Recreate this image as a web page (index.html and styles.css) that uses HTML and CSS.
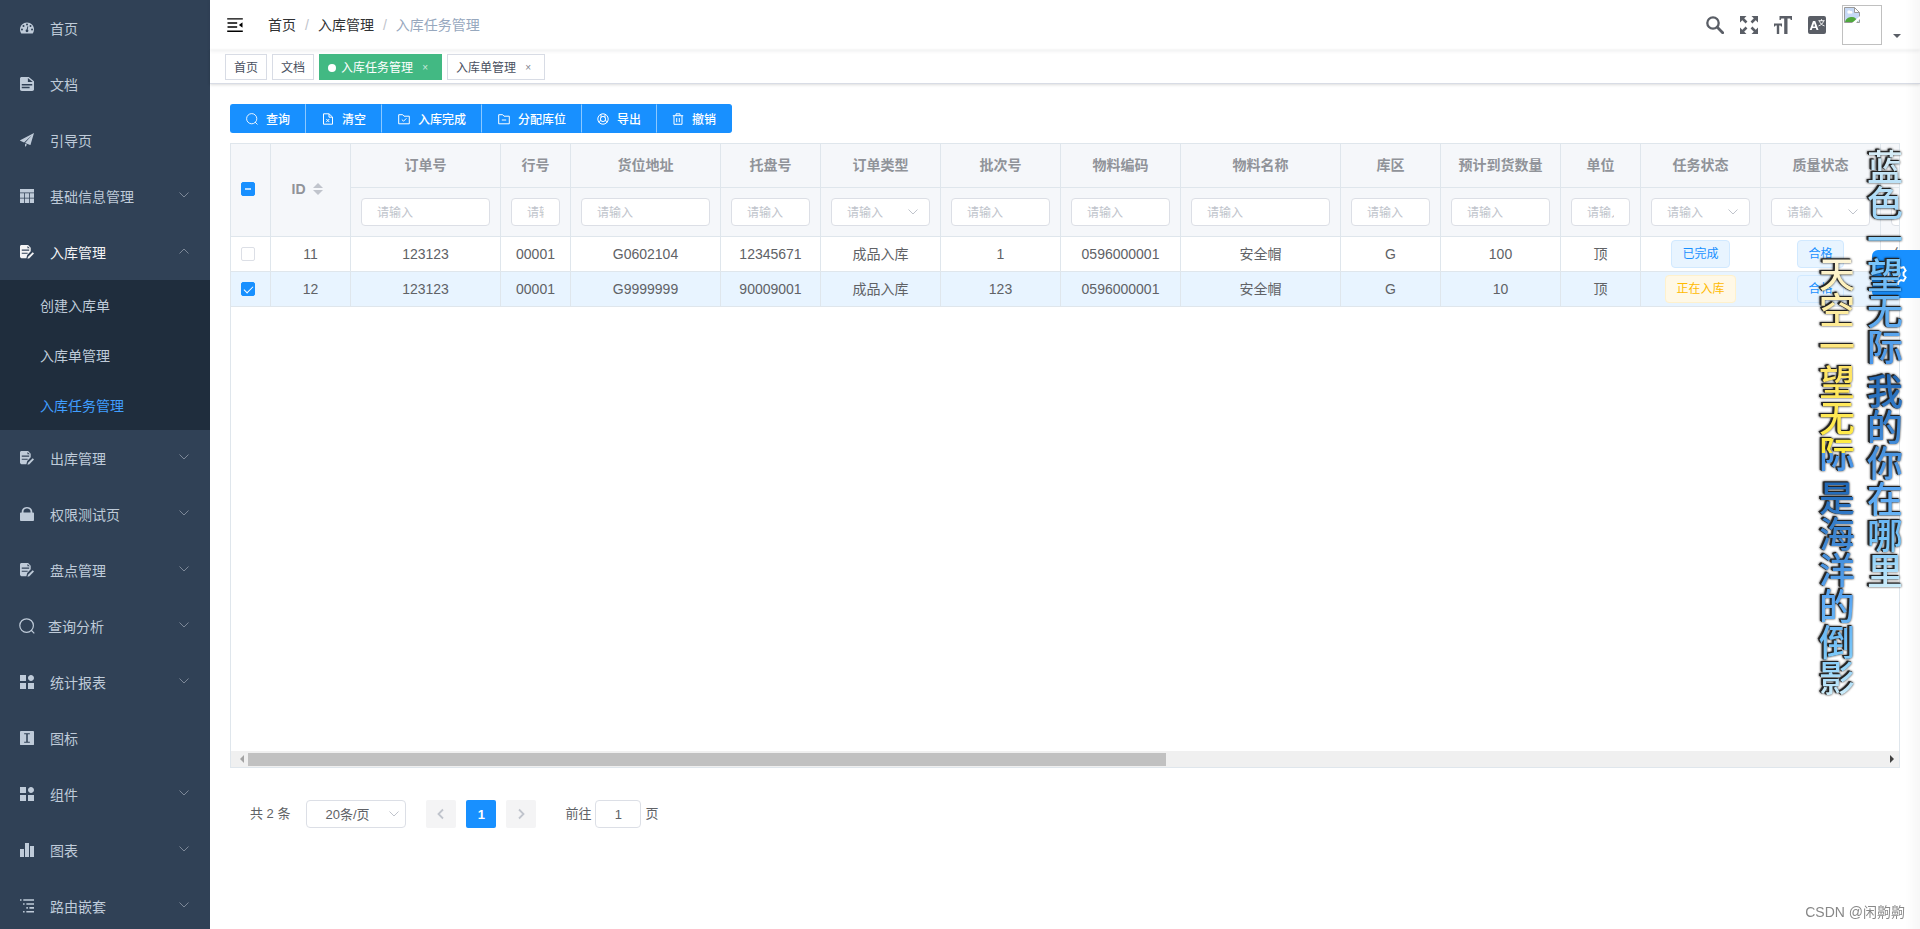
FILE: index.html
```html
<!DOCTYPE html>
<html lang="zh-CN">
<head>
<meta charset="utf-8">
<title>入库任务管理</title>
<link rel="stylesheet" href="styles.css">
</head>
<body>
<svg class="sprite" aria-hidden="true">
  <symbol id="i-dashboard" viewBox="0 0 128 100"><path fill="currentColor" d="M64 0C28.600 0 0 28.500 0 63.600c0 12.500 3.500 24 10.100 34.500.9 1.300 2.200 1.900 3.900 1.900h100c1.700 0 3-.6 3.900-1.900C124.500 87.700 128 76.200 128 63.600 128 28.500 99.300 0 64 0z"/><g class="hole"><circle cx="18" cy="64" r="9"/><circle cx="32" cy="32" r="9"/><circle cx="64" cy="18" r="9"/><circle cx="96" cy="32" r="9"/><circle cx="110" cy="64" r="9"/><circle cx="64" cy="76" r="13"/><path d="M58 72l10-38 8 2-8 40z"/></g></symbol>
  <symbol id="i-doc" viewBox="0 0 128 128"><path fill="currentColor" d="M71.984 44.815H115.9L71.984 9.642v35.173zM16.094.05h63.875l47.906 38.37v76.74c0 3.392-1.682 6.645-4.677 9.044-2.995 2.399-7.057 3.746-11.292 3.746H16.094c-4.236 0-8.297-1.347-11.292-3.746-2.995-2.399-4.677-5.652-4.677-9.044V12.84C.125 5.742 7.23.05 16.094.05zm71.86 102.32V89.58h-71.86v12.79h71.86zm23.952-25.58V64H16.094v12.79h95.812z"/></symbol>
  <symbol id="i-guide" viewBox="0 0 128 128"><path fill="currentColor" d="M1.482 70.131l36.204 16.18 69.932-65.485-61.38 70.594 46.435 18.735c1.119.425 2.397-.17 2.797-1.363v-.085L127.998.047 1.322 65.874c-1.12.597-1.519 1.959-1.04 3.151.32.511.72.937 1.2 1.107zm44.676 57.821L64.22 107.26l-18.062-7.834v28.527z"/></symbol>
  <symbol id="i-table" viewBox="0 0 128 128"><path fill="currentColor" d="M0 0h128v31H0zM0 38h38v42H0zM0 86h38v42H0zM45 38h38v42H45zM45 86h38v42H45zM90 38h38v42H90zM90 86h38v42H90z"/></symbol>
  <symbol id="i-edit" viewBox="0 0 128 128"><path fill="currentColor" fill-rule="evenodd" d="M14 0h60l24 24v34L66 92l-8 28H14c-8 0-14-6-14-14V14C0 6 6 0 14 0zM16 42v11h68V42zM16 70v11h54V70zM68 8v22h22z"/><path fill="currentColor" d="M116 66l12 12-42 42-18 6 6-18z"/></symbol>
  <symbol id="i-lock" viewBox="0 0 128 128"><path fill="currentColor" d="M119.88 49.674h-7.987V39.52C111.893 17.738 90.45.08 63.996.08 37.543.08 16.1 17.738 16.1 39.52v10.154H8.113c-4.408 0-7.987 2.94-7.987 6.577v65.13c0 3.637 3.57 6.577 7.987 6.577H119.88c4.407 0 7.987-2.94 7.987-6.577v-65.13c-.008-3.636-3.58-6.577-7.987-6.577zm-23.953 0H32.065V39.52c0-14.524 14.301-26.295 31.931-26.295 17.63 0 31.932 11.777 31.932 26.295v10.153z"/></symbol>
  <symbol id="i-search" viewBox="0 0 16 16"><circle cx="7.600" cy="7.600" r="6.800" fill="none" stroke="currentColor" stroke-width="1.200"/><path d="M12 12l3.300 3.300" stroke="currentColor" stroke-width="1.200"/></symbol>
  <symbol id="i-component" viewBox="0 0 128 128"><path fill="currentColor" d="M0 0h54.857v54.857H0V0zm0 73.143h54.857V128H0V73.143zm73.143 0H128V128H73.143V73.143zm27.428-18.286C115.72 54.857 128 42.577 128 27.43 128 12.28 115.72 0 100.571 0 85.423 0 73.143 12.28 73.143 27.429c0 15.148 12.28 27.428 27.428 27.428z"/></symbol>
  <symbol id="i-icon" viewBox="0 0 128 128"><path fill="currentColor" fill-rule="evenodd" d="M8 0h112a8 8 0 0 1 8 8v112a8 8 0 0 1-8 8H8a8 8 0 0 1-8-8V8a8 8 0 0 1 8-8zM38 20v10h19v68H38v10h52V98H71V30h19V20z"/></symbol>
  <symbol id="i-chart" viewBox="0 0 128 128"><path fill="currentColor" d="M0 54.857h36.571V128H0V54.857zM91.429 27.43H128V128H91.429V27.429zM45.714 0h36.572v128H45.714V0z"/></symbol>
  <symbol id="i-nested" viewBox="0 0 128 128"><path fill="currentColor" d="M0 2h14v14H0zM30 2h98v14H30zM28 38h14v14H28zM58 38h70v14H58zM58 74h14v14H58zM86 74h42v14H86zM28 110h14v14H28zM58 110h70v14H58z"/></symbol>
  <symbol id="i-down" viewBox="0 0 12 12"><path d="M1.500 3.500L6 8l4.500-4.500" fill="none" stroke="currentColor"/></symbol>
  <symbol id="i-menu" viewBox="0 0 1024 1024"><path transform="rotate(180 512 512)" fill="currentColor" d="M408 442h480c4.400 0 8-3.600 8-8v-56c0-4.400-3.600-8-8-8H408c-4.400 0-8 3.600-8 8v56c0 4.400 3.600 8 8 8zm-8 204c0 4.400 3.600 8 8 8h480c4.400 0 8-3.600 8-8v-56c0-4.400-3.600-8-8-8H408c-4.400 0-8 3.600-8 8v56zm504-486H120c-4.400 0-8 3.600-8 8v56c0 4.400 3.600 8 8 8h784c4.400 0 8-3.600 8-8v-56c0-4.400-3.600-8-8-8zm0 632H120c-4.400 0-8 3.600-8 8v56c0 4.400 3.600 8 8 8h784c4.400 0 8-3.600 8-8v-56c0-4.400-3.600-8-8-8zM142.400 642.100L298.700 519a8.840 8.840 0 0 0 0-13.900L142.400 381.900c-5.800-4.600-14.400-.5-14.400 6.900v246.300a8.900 8.900 0 0 0 14.400 7z"/></symbol>
  <symbol id="i-find" viewBox="0 0 18 18"><circle cx="7" cy="7" r="5.700" fill="none" stroke="currentColor" stroke-width="2.300"/><path d="M11.300 11.300l5.400 5.400" stroke="currentColor" stroke-width="2.800" stroke-linecap="round"/></symbol>
  <symbol id="i-full" viewBox="0 0 18 18"><g fill="currentColor" stroke="currentColor"><path stroke="none" d="M0 0h6.500L0 6.500zM18 0v6.500L11.500 0zM0 18v-6.500L6.500 18zM18 18h-6.500l6.500-6.500z"/><path stroke-width="2.600" d="M2 2l4.500 4.500M16 2l-4.500 4.500M2 16l4.500-4.500M16 16l-4.500-4.500"/></g></symbol>
  <symbol id="i-size" viewBox="0 0 18 18"><path fill="currentColor" d="M5.500 0H18v4h-1.200l-.6-1.500h-2.700V18h-3.300V2.500H7.300L6.700 4H5.500zM0 7.500h8v3H7l-.4-1H5.200V18H2.800V9.500H1.400l-.4 1H0z"/></symbol>
  <symbol id="i-lang" viewBox="0 0 18 18"><path fill="currentColor" fill-rule="evenodd" d="M2 0h14a2 2 0 0 1 2 2v14a2 2 0 0 1-2 2H2a2 2 0 0 1-2-2V2a2 2 0 0 1 2-2zM5 5L1.700 14h2l.7-2h3.400l.7 2h2L7.200 5zM6.100 7.200l1.100 3.200H5z"/><path fill="none" stroke="#fff" stroke-width=".9" d="M10.400 4.700h6.200M13.500 3.200v1.500M11.500 4.900c.6 2.600 2.300 4.100 5 5M15.500 4.900c-.6 2.600-2.300 4.100-5 5"/></symbol>
  <symbol id="i-del" viewBox="0 0 12 12"><g fill="none" stroke="currentColor"><path d="M1.500.8h5.500L10.500 4v7.200h-9zM7 1v3.200h3.300M4.300 6l3 3M7.300 6l-3 3"/></g></symbol>
  <symbol id="i-fchk" viewBox="0 0 12 12"><g fill="none" stroke="currentColor"><path d="M.7 1.700h4l1.300 1.500h5.300v7.600H.7zM3.800 6.500l1.700 1.700 2.900-2.900"/></g></symbol>
  <symbol id="i-frem" viewBox="0 0 12 12"><g fill="none" stroke="currentColor"><path d="M.7 1.700h4l1.300 1.500h5.300v7.600H.7zM3.800 7h4.400"/></g></symbol>
  <symbol id="i-export" viewBox="0 0 12 12"><g fill="none" stroke="currentColor"><circle cx="6" cy="6" r="5.200"/><circle cx="6" cy="6" r="2.600"/><path d="M3.500 7L2 10M8.500 7L10 10M4 1.500v3M8 1.500v3"/></g></symbol>
  <symbol id="i-trash" viewBox="0 0 12 12"><g fill="none" stroke="currentColor"><path d="M.8 2.700h10.400M4 2.500V.8h4v1.700M2 3v8.300h8V3M4.700 5v4.200M7.300 5v4.200"/></g></symbol>
  <symbol id="i-prev" viewBox="0 0 12 12"><path d="M8 1.500L3.500 6 8 10.500" fill="none" stroke="currentColor" stroke-width="1.800"/></symbol>
  <symbol id="i-next" viewBox="0 0 12 12"><path d="M4 1.500L8.500 6 4 10.500" fill="none" stroke="currentColor" stroke-width="1.800"/></symbol>
  <symbol id="i-gear" viewBox="0 0 24 24"><g fill="none" stroke="currentColor" stroke-width="2"><circle cx="12" cy="12" r="3.600"/><path d="M10 2h4l.7 2.700 2.200 1.200 2.700-.8 2 3.500-2 2v2.800l2 2-2 3.500-2.700-.8-2.200 1.200L14 22h-4l-.7-2.700-2.200-1.200-2.700.8-2-3.500 2-2v-2.800l-2-2 2-3.500 2.700.8 2.200-1.200z"/></g></symbol>
</svg>

<nav class="sidebar">
  <a class="item" href="#"><svg class="ico"><use href="#i-dashboard"/></svg><span>首页</span></a>
  <a class="item" href="#"><svg class="ico"><use href="#i-doc"/></svg><span>文档</span></a>
  <a class="item" href="#"><svg class="ico"><use href="#i-guide"/></svg><span>引导页</span></a>
  <a class="item" href="#"><svg class="ico"><use href="#i-table"/></svg><span>基础信息管理</span><svg class="arrow"><use href="#i-down"/></svg></a>
  <a class="item open" href="#"><svg class="ico"><use href="#i-edit"/></svg><span>入库管理</span><svg class="arrow up"><use href="#i-down"/></svg></a>
  <div class="submenu">
    <a class="sub" href="#">创建入库单</a>
    <a class="sub" href="#">入库单管理</a>
    <a class="sub current" href="#">入库任务管理</a>
  </div>
  <a class="item" href="#"><svg class="ico"><use href="#i-edit"/></svg><span>出库管理</span><svg class="arrow"><use href="#i-down"/></svg></a>
  <a class="item" href="#"><svg class="ico"><use href="#i-lock"/></svg><span>权限测试页</span><svg class="arrow"><use href="#i-down"/></svg></a>
  <a class="item" href="#"><svg class="ico"><use href="#i-edit"/></svg><span>盘点管理</span><svg class="arrow"><use href="#i-down"/></svg></a>
  <a class="item wide" href="#"><svg class="ico"><use href="#i-search"/></svg><span>查询分析</span><svg class="arrow"><use href="#i-down"/></svg></a>
  <a class="item" href="#"><svg class="ico"><use href="#i-component"/></svg><span>统计报表</span><svg class="arrow"><use href="#i-down"/></svg></a>
  <a class="item" href="#"><svg class="ico"><use href="#i-icon"/></svg><span>图标</span></a>
  <a class="item" href="#"><svg class="ico"><use href="#i-component"/></svg><span>组件</span><svg class="arrow"><use href="#i-down"/></svg></a>
  <a class="item" href="#"><svg class="ico"><use href="#i-chart"/></svg><span>图表</span><svg class="arrow"><use href="#i-down"/></svg></a>
  <a class="item" href="#"><svg class="ico"><use href="#i-nested"/></svg><span>路由嵌套</span><svg class="arrow"><use href="#i-down"/></svg></a>
</nav>

<main class="main">
  <header class="navbar">
    <button class="plain hamburger" aria-label="折叠菜单"><svg><use href="#i-menu"/></svg></button>
    <div class="crumbs"><a href="#">首页</a><i>/</i><a href="#">入库管理</a><i>/</i><span>入库任务管理</span></div>
    <div class="tools">
      <button class="plain" aria-label="搜索"><svg><use href="#i-find"/></svg></button>
      <button class="plain" aria-label="全屏"><svg><use href="#i-full"/></svg></button>
      <button class="plain" aria-label="字号"><svg><use href="#i-size"/></svg></button>
      <button class="plain" aria-label="语言"><svg><use href="#i-lang"/></svg></button>
      <button class="plain profile" aria-label="用户">
        <span class="avatar"><svg viewBox="0 0 16 16"><path d="M.5.500h10l5 5v10H.5z" fill="#c6d9f5" stroke="#9a9a9a"/><path d="M10.500.500v5h5z" fill="#fff" stroke="#9a9a9a"/><circle cx="5" cy="5" r="1.700" fill="#fff"/><circle cx="7" cy="5.300" r="1.400" fill="#fff"/><path d="M1 15c1-4 4-5 7-5s5 2 6 5z" fill="#4fa83d"/><path d="M8 16l8-7v3l-4 4z" fill="#fff"/></svg></span>
        <span class="caret"></span>
      </button>
    </div>
  </header>

  <div class="tabs">
    <a class="tab" href="#">首页</a>
    <a class="tab" href="#">文档</a>
    <a class="tab active" href="#">入库任务管理<button class="plain close" aria-label="关闭">×</button></a>
    <a class="tab" href="#">入库单管理<button class="plain close" aria-label="关闭">×</button></a>
  </div>

  <section class="content">
    <div class="toolbar">
      <button><svg><use href="#i-search"/></svg>查询</button>
      <button><svg><use href="#i-del"/></svg>清空</button>
      <button><svg><use href="#i-fchk"/></svg>入库完成</button>
      <button><svg><use href="#i-frem"/></svg>分配库位</button>
      <button class="joined"><svg><use href="#i-export"/></svg>导出</button>
      <button class="joined"><svg><use href="#i-trash"/></svg>撤销</button>
    </div>

    <div class="grid">
      <div class="viewport">
        <table>
          <colgroup><col class="w40"><col class="w80"><col class="w150"><col class="w70"><col class="w150"><col class="w100"><col class="w120"><col class="w120"><col class="w120"><col class="w160"><col class="w100"><col class="w120"><col class="w80"><col class="w120"><col class="w120"><col class="w120"></colgroup>
          <thead>
            <tr class="titles">
              <th rowspan="2"><input type="checkbox" class="check partial" aria-label="全选"></th>
              <th rowspan="2"><button class="plain sort">ID<span class="carets"></span></button></th>
              <th>订单号</th><th>行号</th><th>货位地址</th><th>托盘号</th><th>订单类型</th><th>批次号</th><th>物料编码</th><th>物料名称</th><th>库区</th><th>预计到货数量</th><th>单位</th><th>任务状态</th><th>质量状态</th><th></th>
            </tr>
            <tr class="filters">
              <th><input class="field" placeholder="请输入" aria-label="订单号"></th>
              <th><input class="field" placeholder="请输入" aria-label="行号"></th>
              <th><input class="field" placeholder="请输入" aria-label="货位地址"></th>
              <th><input class="field" placeholder="请输入" aria-label="托盘号"></th>
              <th><div class="pick"><select class="field" aria-label="订单类型"><option>请输入</option></select><svg><use href="#i-down"/></svg></div></th>
              <th><input class="field" placeholder="请输入" aria-label="批次号"></th>
              <th><input class="field" placeholder="请输入" aria-label="物料编码"></th>
              <th><input class="field" placeholder="请输入" aria-label="物料名称"></th>
              <th><input class="field" placeholder="请输入" aria-label="库区"></th>
              <th><input class="field" placeholder="请输入" aria-label="预计到货数量"></th>
              <th><input class="field" placeholder="请输入" aria-label="单位"></th>
              <th><div class="pick"><select class="field" aria-label="任务状态"><option>请输入</option></select><svg><use href="#i-down"/></svg></div></th>
              <th><div class="pick"><select class="field" aria-label="质量状态"><option>请输入</option></select><svg><use href="#i-down"/></svg></div></th>
              <th><input class="field" aria-label="供应商"></th>
            </tr>
          </thead>
          <tbody>
            <tr>
              <td><input type="checkbox" class="check" aria-label="选择 11"></td><td>11</td><td>123123</td><td>00001</td><td>G0602104</td><td>12345671</td><td>成品入库</td><td>1</td><td>0596000001</td><td>安全帽</td><td>G</td><td>100</td><td>顶</td><td><span class="badge">已完成</span></td><td><span class="badge">合格</span></td><td class="edge">供</td>
            </tr>
            <tr class="selected">
              <td><input type="checkbox" class="check" checked aria-label="选择 12"></td><td>12</td><td>123123</td><td>00001</td><td>G9999999</td><td>90009001</td><td>成品入库</td><td>123</td><td>0596000001</td><td>安全帽</td><td>G</td><td>10</td><td>顶</td><td><span class="badge warn">正在入库</span></td><td><span class="badge">合格</span></td><td></td>
            </tr>
          </tbody>
        </table>
      </div>
      <div class="scroll"><span class="left"></span><div class="track"><div class="thumb"></div></div><span class="right"></span></div>
    </div>

    <div class="pager">
      <span class="total">共 2 条</span>
      <div class="pick size"><select class="field" aria-label="每页条数"><option>20条/页</option></select><svg><use href="#i-down"/></svg></div>
      <button class="page" disabled aria-label="上一页"><svg><use href="#i-prev"/></svg></button>
      <button class="page on">1</button>
      <button class="page" disabled aria-label="下一页"><svg><use href="#i-next"/></svg></button>
      <label class="jump">前往<input class="field" value="1">页</label>
    </div>
  </section>
</main>

<div class="edge-shade"></div>
<button class="settings" aria-label="设置"><svg><use href="#i-gear"/></svg></button>
<div class="lyrics">
  <p class="line first"><span class="sky">蓝色一望无际</span> <span class="sea">我的你在哪里</span></p>
  <p class="line second"><span class="sun">天空一望无际</span> <span class="sea">是海洋的倒影</span></p>
</div>
<div class="watermark">CSDN @闲齁齁</div>
</body>
</html>
```
FILE: styles.css
```css
* { box-sizing: border-box; }
body {
  margin: 0;
  display: flex;
  height: 100vh;
  overflow: hidden;
  background: #fff;
  color: #606266;
  font: 14px/20px "Liberation Sans", "Noto Sans CJK SC", sans-serif;
}
a { color: inherit; text-decoration: none; }
button, input, select { font-family: inherit; }
.sprite { position: absolute; width: 0; height: 0; }
.hole { fill: #304156; }
.plain { border: 0; padding: 0; background: none; color: inherit; font: inherit; }
svg { display: block; flex: none; }

/* Sidebar */
.sidebar { width: 210px; flex: none; overflow: hidden; background: #304156; color: #bfcbd9; }
.item { display: flex; align-items: center; height: 56px; padding: 0 20px; }
.item span, .sub { padding-top: 1px; }
.item .ico { width: 14px; height: 14px; margin-right: 16px; }
.item.wide { padding-left: 19px; }
.item.wide .ico { width: 16px; height: 16px; margin-right: 13px; }
.item .arrow { width: 12px; height: 12px; margin: 0 0 2px auto; color: #7d8898; }
.item .up { transform: rotate(180deg); }
.item.open { color: #f4f4f5; }
.submenu { background: #1f2d3d; }
.sub { display: flex; align-items: center; height: 50px; padding-left: 40px; }
.sub.current { color: #409eff; }

/* Top bar */
.main { flex: 1; min-width: 0; display: flex; flex-direction: column; }
.navbar { display: flex; align-items: center; height: 50px; flex: none; padding: 0 19px 0 15px; box-shadow: 0 1px 4px rgba(0, 21, 41, .08); }
.hamburger { color: #000; }
.hamburger svg { width: 20px; height: 20px; }
.crumbs { display: flex; align-items: center; margin-left: 23px; color: #303133; }
.crumbs i { margin: 0 9px; font-style: normal; color: #c0c4cc; }
.crumbs span { color: #97a8be; }
.tools { display: flex; align-items: center; gap: 16px; margin-left: auto; color: #5a5e66; }
.tools svg { width: 18px; height: 18px; }
.profile { display: flex; align-items: flex-end; gap: 11px; }
.avatar { width: 40px; height: 40px; padding: 1px; border: 1px solid #c0c0c0; }
.avatar svg { width: 16px; height: 16px; }
.caret { margin-bottom: 7px; border: 4px solid transparent; border-top-color: #5a5e66; border-bottom: 0; }

/* Visited tabs */
.tabs { display: flex; gap: 5px; height: 34px; flex: none; padding: 4px 15px; border-bottom: 1px solid #d8dce5; box-shadow: 0 1px 3px rgba(0, 0, 0, .12), 0 0 3px rgba(0, 0, 0, .04); font-size: 12px; color: #495060; }
.tab { display: flex; align-items: center; height: 26px; padding: 1px 8px 0; border: 1px solid #d8dce5; background: #fff; }
.tab.active { border-color: #42b983; background: #42b983; color: #fff; }
.tab.active::before { content: ""; width: 8px; height: 8px; margin-right: 5px; border-radius: 50%; background: #fff; }
.close { width: 16px; margin-left: 4px; font-size: 10px; text-align: center; opacity: .7; }

/* Toolbar */
.content { flex: 1; min-height: 0; display: flex; flex-direction: column; padding: 20px 20px 0; }
.toolbar { display: flex; margin-bottom: 10px; }
.toolbar button { display: flex; align-items: center; gap: 8px; height: 29px; padding: 0 15px; border: 1px solid #1890ff; border-right-color: #8cc8ff; background: #1890ff; color: #fff; font-size: 12px; font-weight: 500; }
.toolbar button:first-child { border-radius: 3px 0 0 3px; }
.toolbar button:last-child { border-color: #1890ff; border-radius: 0 3px 3px 0; }
.toolbar .joined { margin-left: -1px; border-left-color: #8cc8ff; }
.toolbar .joined:last-child { border-left-color: #8cc8ff; }
.toolbar svg { width: 12px; height: 12px; }

/* Task table */
.grid { flex: 1; min-height: 0; display: flex; flex-direction: column; border: 1px solid #dfe6ec; }
.viewport { flex: 1; min-height: 0; overflow: hidden; }
table { width: 1770px; table-layout: fixed; border-collapse: separate; border-spacing: 0; text-align: center; }
.w40 { width: 40px; }
.w70 { width: 70px; }
.w80 { width: 80px; }
.w100 { width: 100px; }
.w120 { width: 120px; }
.w150 { width: 150px; }
.w160 { width: 160px; }
th, td { padding: 0; border: 0 solid #dfe6ec; border-width: 0 1px 1px 0; }
th { background: #f5f7fa; color: #909399; font-weight: 700; }
.titles th { height: 44px; padding-bottom: 2px; }
.filters th { height: 49px; padding: 0 10px; }
td { height: 35px; white-space: nowrap; }
.selected td { background: #e8f4ff; }
.edge { padding-left: 12px; text-align: left; }
.check { appearance: none; display: block; width: 14px; height: 14px; margin: 0 auto 0 10px; border: 1px solid #dcdfe6; border-radius: 2px; background: #fff; }
.check:checked, .partial { border-color: #1890ff; background: #1890ff; }
.check:checked::after { content: ""; display: block; width: 4px; height: 8px; margin: 1px 0 0 4px; border: solid #fff; border-width: 0 1px 1px 0; transform: rotate(45deg); }
.partial::after { content: ""; display: block; width: 6px; height: 2px; margin: 5px 3px; background: #b9deff; }
.sort { display: inline-flex; align-items: center; }
.carets { display: flex; flex-direction: column; align-items: center; gap: 2px; width: 24px; }
.carets::before, .carets::after { content: ""; border: 5px solid transparent; }
.carets::before { border-top: 0; border-bottom-color: #c0c4cc; }
.carets::after { border-bottom: 0; border-top-color: #c0c4cc; }
.field { appearance: none; display: block; width: 100%; height: 28px; padding: 1px 15px 0; border: 1px solid #dcdfe6; border-radius: 4px; outline: 0; background: #fff; color: #c0c4cc; font-size: 12px; font-weight: 400; }
.field::placeholder { color: #c0c4cc; }
.pick { position: relative; }
.pick svg { position: absolute; top: 8px; right: 11px; width: 12px; height: 12px; color: #c0c4cc; pointer-events: none; }
.badge { display: inline-block; height: 28px; padding: 0 10px; border: 1px solid #d1e9ff; border-radius: 4px; background: #e8f4ff; color: #1890ff; font-size: 12px; line-height: 26px; vertical-align: middle; }
.warn { border-color: #fff1cc; background: #fff8e6; color: #ffba00; }

/* Horizontal scroll bar */
.scroll { display: flex; align-items: center; height: 16px; flex: none; background: #f0f0f0; }
.scroll .left, .scroll .right { width: 17px; }
.scroll .left::before, .scroll .right::before { content: ""; display: block; width: 4px; border: 4px solid transparent; }
.scroll .left::before { margin-left: 5px; border-left: 0; border-right-color: #a3a3a3; }
.scroll .right::before { margin-left: 8px; border-right: 0; border-left-color: #404040; }
.track { flex: 1; }
.thumb { width: 56.2%; height: 13px; background: #c1c1c1; }

/* Pagination */
.pager { display: flex; align-items: center; flex: none; padding: 32px 20px 101px; font-size: 13px; }
.size { width: 100px; margin: 0 20px 0 16px; }
.size .field { padding-left: 18px; color: #606266; font-size: 13px; }
.size svg { right: 6px; }
.page { display: grid; place-items: center; width: 30px; height: 28px; margin-right: 10px; padding: 0; border: 0; border-radius: 2px; background: #f4f4f5; color: #c0c4cc; font-size: 13px; font-weight: 700; }
.page.on { background: #1890ff; color: #fff; }
.page svg { width: 12px; height: 12px; }
.jump { display: flex; align-items: center; margin-left: 19px; }
.jump .field { width: 46px; margin: 0 4px; padding: 0 3px; color: #606266; font-size: 13px; text-align: center; }

/* Floating layers */
.edge-shade { position: fixed; top: 0; right: 0; bottom: 0; width: 15px; background: linear-gradient(to right, rgba(0, 0, 0, 0), rgba(0, 0, 0, .03)); }
.settings { position: fixed; top: 250px; right: 0; display: grid; place-items: center; width: 48px; height: 48px; padding: 0; border: 0; border-radius: 6px 0 0 6px; background: #1890ff; color: #fff; }
.settings svg { width: 24px; height: 24px; }
.lyrics { position: fixed; top: 149px; right: 17px; display: flex; flex-direction: row-reverse; gap: 12px; pointer-events: none; filter: drop-shadow(-1px -1px 0 #222) drop-shadow(-1px 0 0 #333) drop-shadow(0 0 1px rgba(0, 0, 0, .8)); }
.line { margin: 0; writing-mode: vertical-rl; font: 500 36px/36px "Noto Sans CJK SC", sans-serif; white-space: nowrap; }
.second { margin-top: 107px; }
.line span { color: transparent; background-clip: text; -webkit-background-clip: text; }
.sky { background-image: linear-gradient(#d8edf6, #7cc8fa 50%, #4a96e8); }
.sea { background-image: linear-gradient(#1f66b4, #5aa6f2 55%, #78c6f8 80%, #d0eefa); }
.sun { background-image: linear-gradient(#fdf6dc, #ffe46a 50%, #ffec40 91%, #4a96e8 91%); }
.watermark { position: fixed; right: 15px; bottom: 7px; color: #888; font-size: 14px; }
```
